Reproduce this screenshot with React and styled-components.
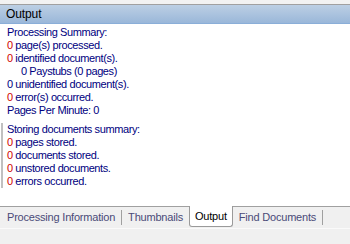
import React from 'react'
import styled, { createGlobalStyle } from 'styled-components'

const Global = createGlobalStyle`
  html, body {
    margin: 0;
    padding: 0;
    background: #f0f0f0;
  }
  body {
    font-family: 'Liberation Sans', Arial, sans-serif;
    font-size: 11px;
  }
`

const Window = styled.div`
  width: 350px;
  height: 244px;
  display: flex;
  flex-direction: column;
  background: #f0f0f0;
  overflow: hidden;
`

const TopStrip = styled.div`
  height: 4px;
  background: #f2f2f2;
  border-bottom: 1px solid #a0a0a0;
`

const Header = styled.div`
  height: 18px;
  display: flex;
  align-items: center;
  padding-left: 6px;
  background: linear-gradient(to bottom, #bccfe4, #9ab7d9);
  border-bottom: 1px solid #8aaed8;
  color: #000;
  font-size: 12px;
  letter-spacing: -0.1px;
`

const Content = styled.div`
  flex: 1;
  background: #fff;
  padding-top: 2px;
  display: flex;
  flex-direction: column;
  gap: 6px;
`

const Section = styled.div`
  display: flex;
  flex-direction: column;
  padding-left: 7px;
  ${p =>
    p.marked &&
    `
    margin-left: 1px;
    padding-left: 4px;
    border-left: 2px solid #c0c0c0;
  `}
`

const Line = styled.div`
  height: 13px;
  line-height: 13px;
  color: #000080;
  letter-spacing: -0.4px;
  white-space: nowrap;
  padding-left: ${p => (p.indent ? '14px' : '0')};
`

const Red = styled.span`
  color: #d00000;
`

const TabStrip = styled.div`
  height: 21px;
  flex: none;
  display: flex;
  align-items: stretch;
  border-top: 1px solid #a0a0a0;
  border-bottom: 1px solid #fafafa;
  background: #f0f0f0;
  padding-left: 1px;
`

const Tab = styled.div`
  display: flex;
  align-items: center;
  padding: 0 ${p => (p.active ? '5px' : '6px')} 1px;
  color: ${p => (p.active ? '#000' : '#4a4a78')};
  letter-spacing: -0.2px;
  white-space: nowrap;
  ${p =>
    p.active &&
    `
    background: #fff;
    border: 1px solid #9a9a9a;
    border-top: none;
    border-radius: 0 0 3px 3px;
    margin-top: -1px;
    margin-bottom: 1px;
  `}
`

const Sep = styled.div`
  width: 1px;
  background: #a0a0a0;
  margin: 3px 0 3px;
`

const Bottom = styled.div`
  height: 15px;
  flex: none;
  background: #f0f0f0;
`

export default function App() {
  return (
    <Window>
      <Global />
      <TopStrip />
      <Header>Output</Header>
      <Content>
        <Section>
          <Line>Processing Summary:</Line>
          <Line><Red>0</Red> page(s) processed.</Line>
          <Line><Red>0</Red> identified document(s).</Line>
          <Line indent>0 Paystubs (0 pages)</Line>
          <Line>0 unidentified document(s).</Line>
          <Line><Red>0</Red> error(s) occurred.</Line>
          <Line>Pages Per Minute: 0</Line>
        </Section>
        <Section marked>
          <Line>Storing documents summary:</Line>
          <Line><Red>0</Red> pages stored.</Line>
          <Line><Red>0</Red> documents stored.</Line>
          <Line><Red>0</Red> unstored documents.</Line>
          <Line><Red>0</Red> errors occurred.</Line>
        </Section>
      </Content>
      <TabStrip>
        <Tab>Processing Information</Tab>
        <Sep />
        <Tab>Thumbnails</Tab>
        <Tab active>Output</Tab>
        <Tab>Find Documents</Tab>
        <Sep />
      </TabStrip>
      <Bottom />
    </Window>
  )
}
